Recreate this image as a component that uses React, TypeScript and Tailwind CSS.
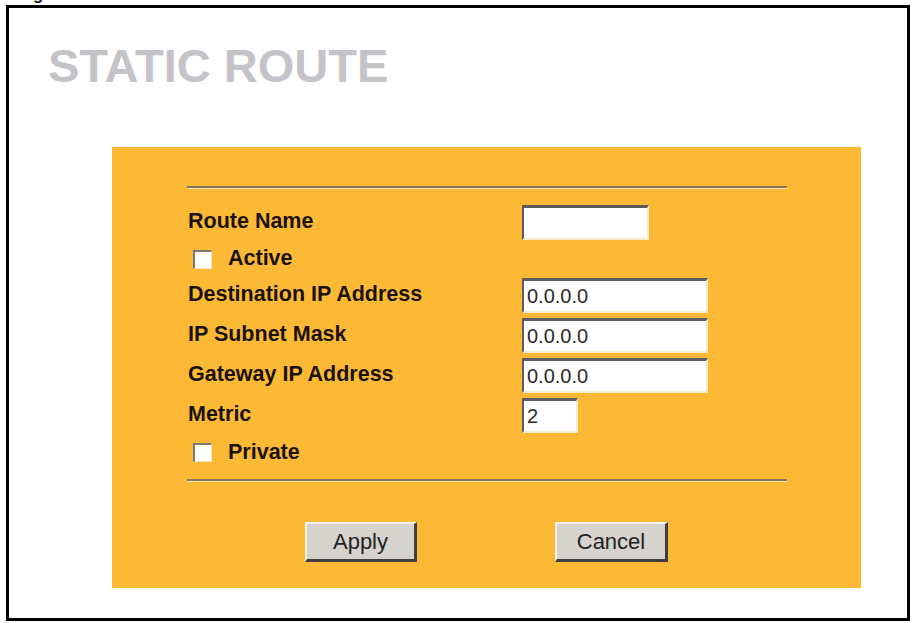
const font = { fontFamily: '"Liberation Sans", Arial, sans-serif' }

function Field({ value, width }: { value: string; width: string }) {
  return (
    <div
      className={`${width} h-[35px] bg-white border-t-[3px] border-l-2 border-b-2 border-r-2 border-t-[#5c5c5c] border-l-[#5c5c5c] border-b-[#f6ebcb] border-r-[#f6ebcb] pl-[3px] flex items-center text-[20px] text-[#2b2b2b] leading-none`}
    >
      {value}
    </div>
  )
}

function Check() {
  return (
    <span className="w-[19px] h-[19px] bg-white border-t-2 border-l-2 border-b border-r border-t-[#7a7a7a] border-l-[#7a7a7a] border-b-[#f3e6c2] border-r-[#f3e6c2] shrink-0" />
  )
}

function Rule() {
  return <div className="ml-[75px] w-[600px] h-[3px] border-t-2 border-[#837862] border-b border-b-[#fde3a6]" />
}

function Label({ children }: { children: React.ReactNode }) {
  return <span className="text-[21.5px] font-bold text-[#1a1108] leading-none">{children}</span>
}

export default function App() {
  const rows = [
    { label: "Destination IP Address", value: "0.0.0.0" },
    { label: "IP Subnet Mask", value: "0.0.0.0" },
    { label: "Gateway IP Address", value: "0.0.0.0" },
  ]

  return (
    <div className="w-[912px] h-[623px] bg-white overflow-hidden" style={font}>
      {/* caption cut off above the frame */}
      <div className="h-[5px] overflow-hidden pl-[19px]">
        <span className="block -mt-[13px] text-[16px] leading-[16px] font-bold text-black">Figure</span>
      </div>

      <div className="ml-[6px] w-[904px] h-[616px] border-[3px] border-black pt-[34px]">
        <h1 className="pl-[39px] text-[47px] leading-[47px] font-bold text-[#c4c3c8]">STATIC ROUTE</h1>

        <div className="mt-[58px] ml-[103px] w-[749px] h-[441px] bg-[#fcb935] pt-[39px]">
          <Rule />

          <div className="mt-[12px] pl-[76px] grid grid-cols-[334px_1fr]">
            <div className="h-[42px] flex items-center">
              <Label>Route Name</Label>
            </div>
            <div className="h-[42px] flex items-center">
              <Field value="" width="w-[127px]" />
            </div>

            <div className="col-span-2 h-[32px] flex items-center gap-[16px] pl-[5px]">
              <Check />
              <Label>Active</Label>
            </div>

            {rows.map((r) => (
              <div key={r.label} className="contents">
                <div className="h-[40px] flex items-center">
                  <Label>{r.label}</Label>
                </div>
                <div className="h-[40px] flex items-center">
                  <Field value={r.value} width="w-[186px]" />
                </div>
              </div>
            ))}

            <div className="h-[40px] flex items-center">
              <Label>Metric</Label>
            </div>
            <div className="h-[40px] flex items-center">
              <Field value="2" width="w-[56px]" />
            </div>

            <div className="col-span-2 h-[35px] flex items-center gap-[16px] pl-[5px]">
              <Check />
              <Label>Private</Label>
            </div>
          </div>

          <div className="mt-[9px]">
            <Rule />
          </div>

          <div className="mt-[40px] flex justify-center gap-[138px]">
            <button className="w-[112px] h-[40px] bg-[#d6d3ce] border-t-2 border-l-2 border-t-[#f4f2ee] border-l-[#f4f2ee] border-b-[3px] border-r-[3px] border-b-[#3f3f3f] border-r-[#3f3f3f] text-[22px] text-[#222] leading-none">
              Apply
            </button>
            <button className="w-[113px] h-[40px] bg-[#d6d3ce] border-t-2 border-l-2 border-t-[#f4f2ee] border-l-[#f4f2ee] border-b-[3px] border-r-[3px] border-b-[#3f3f3f] border-r-[#3f3f3f] text-[22px] text-[#222] leading-none">
              Cancel
            </button>
          </div>
        </div>
      </div>
    </div>
  )
}
